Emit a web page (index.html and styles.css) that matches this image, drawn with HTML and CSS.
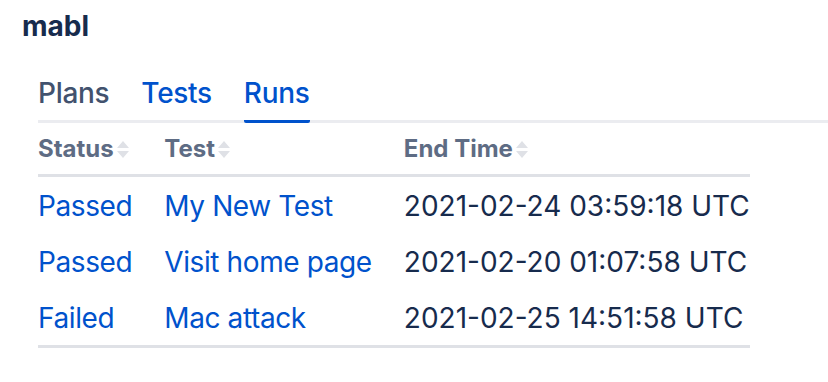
FILE: index.html
```html
<!DOCTYPE html>
<html lang="en">

<head>
  <meta charset="utf-8" />
  <title>mabl</title>
  <link rel="stylesheet" href="styles.css">
</head>

<body>
  <h1 class="title">mabl</h1>

  <div class="tabs">
    <span class="tab">Plans</span>
    <span class="tab tab-link">Tests</span>
    <span class="tab tab-active">Runs</span>
  </div>

  <table class="runs">
    <thead>
      <tr>
        <th class="col-status">Status<svg class="sort" width="12" height="17" viewBox="0 0 12 17"><path d="M6 0 L12 7 H0 Z M0 10 H12 L6 17 Z" /></svg></th>
        <th class="col-test">Test<svg class="sort" width="12" height="17" viewBox="0 0 12 17"><path d="M6 0 L12 7 H0 Z M0 10 H12 L6 17 Z" /></svg></th>
        <th class="col-time">End Time<svg class="sort" width="12" height="17" viewBox="0 0 12 17"><path d="M6 0 L12 7 H0 Z M0 10 H12 L6 17 Z" /></svg></th>
      </tr>
    </thead>
    <tbody>
      <tr>
        <td><a href="#">Passed</a></td>
        <td><a href="#">My New Test</a></td>
        <td>2021-02-24 03:59:18 UTC</td>
      </tr>
      <tr>
        <td><a href="#">Passed</a></td>
        <td><a href="#">Visit home page</a></td>
        <td>2021-02-20 01:07:58 UTC</td>
      </tr>
      <tr>
        <td><a href="#">Failed</a></td>
        <td><a href="#">Mac attack</a></td>
        <td>2021-02-25 14:51:58 UTC</td>
      </tr>
    </tbody>
  </table>
</body>

</html>
```

FILE: styles.css
```css
body {
  margin: 0px;
  font-family: Inter, "Noto Sans", sans-serif;
  color: #172B4D;
  background: #fff;
}

.title {
  margin: 10px 0 0 22px;
  font-size: 28px;
  line-height: 32px;
  font-weight: 700;
  color: #172B4D;
}

.tabs {
  display: flex;
  margin: 31px 0 0 38px;
  border-bottom: 3px solid #EBECF0;
}

.tab {
  font-size: 28px;
  line-height: 40px;
  font-weight: 500;
  letter-spacing: -0.3px;
  color: #42526E;
  padding: 0 0 7px 0;
  margin-right: 32px;
}

.tab-link {
  color: #0052CC;
}

.tab-active {
  color: #0052CC;
  border-bottom: 3px solid #0052CC;
  border-radius: 2px;
  margin-bottom: -3px;
}

.runs {
  margin-left: 38px;
  width: 712px;
  border-collapse: collapse;
  border-bottom: 3px solid #DFE1E6;
}

.runs th {
  text-align: left;
  font-size: 24px;
  line-height: 32px;
  font-weight: 700;
  color: #5E6C84;
  padding: 10px 16px 9px 16px;
  border-bottom: 3px solid #DFE1E6;
  white-space: nowrap;
}

.runs td {
  font-size: 28px;
  line-height: 32px;
  padding: 13px 16px 11px 16px;
  white-space: nowrap;
}

.runs th:first-child,
.runs td:first-child {
  padding-left: 0;
}

.runs th:last-child,
.runs td:last-child {
  padding-right: 0;
}

.runs a {
  color: #0052CC;
  text-decoration: none;
  letter-spacing: -0.4px;
}

.sort {
  fill: #DFE1E6;
  margin-left: 3px;
  vertical-align: -1px;
}
```
